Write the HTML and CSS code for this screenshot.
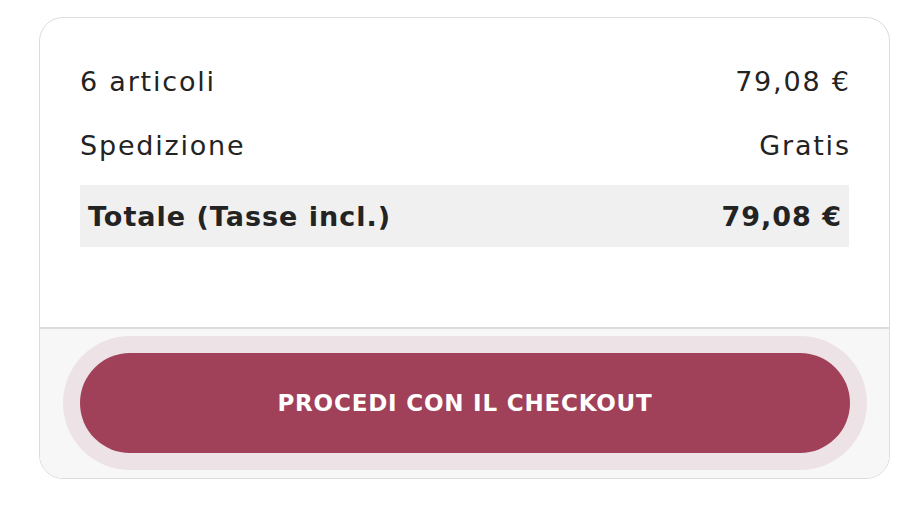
FILE: index.html
```html
<!DOCTYPE html>
<html lang="it">
<head>
<meta charset="utf-8">
<title>Riepilogo carrello</title>
<link rel="stylesheet" href="styles.css">
</head>
<body>
<div class="card">
  <div class="summary">
    <div class="row"><span>6 articoli</span><span>79,08 €</span></div>
    <div class="row"><span>Spedizione</span><span>Gratis</span></div>
    <div class="row total"><span>Totale (Tasse incl.)</span><span>79,08 €</span></div>
  </div>
  <div class="actions">
    <button class="checkout">PROCEDI CON IL CHECKOUT</button>
  </div>
</div>
</body>
</html>
```
FILE: styles.css
```css
* { box-sizing: border-box; }
html, body { margin: 0; background: #fff; }
body {
  padding: 17px 29px 0 39px;
  font-family: "DejaVu Sans", "Noto Sans", sans-serif;
  color: #232323;
}
.card {
  width: 851px;
  border: 1px solid #dcdcdc;
  border-radius: 24px;
  overflow: hidden;
  background: #fff;
}
.summary {
  padding: 39px 40px 80px 40px;
  display: flex;
  flex-direction: column;
  gap: 16px;
}
.row {
  display: flex;
  justify-content: space-between;
  align-items: center;
  height: 48px;
  font-size: 27px;
  letter-spacing: 1.8px;
}
.row span:last-child { margin-right: -1.8px; }
.row.total {
  height: 62px;
  background: #f0f0f0;
  padding: 0 8px;
  font-weight: 700;
  letter-spacing: 1px;
}
.row.total span:last-child { margin-right: -1px; }
.actions {
  border-top: 2px solid #dcdcdc;
  background: #f7f7f7;
  padding: 24px 39px 25px 40px;
}
.checkout {
  display: block;
  width: 100%;
  height: 100px;
  border: none;
  border-radius: 50px;
  background: #a14059;
  box-shadow: 0 0 0 17px #ede3e7;
  color: #fff;
  font-family: inherit;
  font-size: 23px;
  font-weight: 700;
  letter-spacing: 0.8px;
}
```
